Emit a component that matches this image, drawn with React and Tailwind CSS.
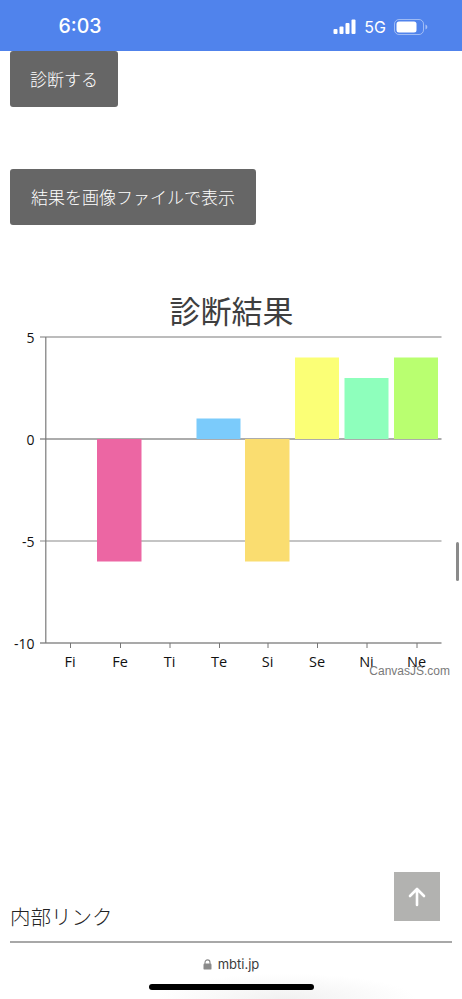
const JP = "font-['Noto_Sans_CJK_JP','Noto_Sans',sans-serif]";

const bars = [
  { x: 97, w: 44.5, y: 439, h: 122.5, color: "#ec66a3" },
  { x: 196.5, w: 44, y: 418.5, h: 20.5, color: "#7bcbfb" },
  { x: 245, w: 44.5, y: 439, h: 122.5, color: "#fadd70" },
  { x: 295, w: 44, y: 357.5, h: 81.5, color: "#fbff76" },
  { x: 344.5, w: 44, y: 378, h: 61, color: "#8effbc" },
  { x: 394, w: 44, y: 357.5, h: 81.5, color: "#b9ff70" },
];

const yLabels = [
  { label: "5", y: 337, stroke: "#7a7a7a" },
  { label: "0", y: 439, stroke: "#5a5a5a" },
  { label: "-5", y: 541, stroke: "#8a8a8a" },
  { label: "-10", y: 643, stroke: "#555" },
];

const xLabels = [
  { label: "Fi", x: 70 },
  { label: "Fe", x: 120 },
  { label: "Ti", x: 169.5 },
  { label: "Te", x: 219 },
  { label: "Si", x: 267.5 },
  { label: "Se", x: 317 },
  { label: "Ni", x: 366.5 },
  { label: "Ne", x: 416.5 },
];

function Chart() {
  // viewBox keeps page coordinates so the numbers read off the screenshot directly
  return (
    <svg width="462" height="405" viewBox="0 285 462 405" className="block">
      <text x="231.5" y="323" textAnchor="middle" fontSize="31" fill="#3f3f3f" fontFamily="'Noto Sans CJK JP', sans-serif">診断結果</text>
      {yLabels.map(l => (
        <g key={l.label}>
          <line x1="40" x2="441.5" y1={l.y} y2={l.y} stroke={l.stroke} strokeWidth="1.2" />
          <text x="34.5" y={l.y + 5.5} textAnchor="end" fontSize="14" fill="#111" fontFamily="'Open Sans', sans-serif">{l.label}</text>
        </g>
      ))}
      <line x1="45.8" x2="45.8" y1="337" y2="643" stroke="#7a7a7a" strokeWidth="1.2" />
      {bars.map(b => (
        <rect key={b.x} x={b.x} y={b.y} width={b.w} height={b.h} fill={b.color} />
      ))}
      {xLabels.map(l => (
        <g key={l.label}>
          <line x1={l.x + 0.5} x2={l.x + 0.5} y1="643" y2="648" stroke="#777" strokeWidth="1" />
          <text x={l.x} y="667" textAnchor="middle" fontSize="14.5" fill="#111" fontFamily="'Open Sans', sans-serif">{l.label}</text>
        </g>
      ))}
      <text x="450" y="675" textAnchor="end" fontSize="12" fill="#7a7a7a" fontFamily="'Liberation Sans', sans-serif">CanvasJS.com</text>
    </svg>
  );
}

function Signal() {
  return (
    <svg width="24" height="16" viewBox="0 0 24 16" className="block">
      <rect x="0.5" y="10" width="4" height="5" rx="1" fill="#fff" />
      <rect x="6.5" y="7.5" width="4" height="7.5" rx="1" fill="#fff" />
      <rect x="12.5" y="4" width="4" height="11" rx="1" fill="#fff" />
      <rect x="18.5" y="0.5" width="4" height="14.5" rx="1" fill="#fff" />
    </svg>
  );
}

function Battery() {
  return (
    <svg width="34" height="16" viewBox="0 0 34 16" className="block">
      <rect x="0.5" y="0.5" width="29" height="15" rx="4.5" fill="none" stroke="#ffffff" strokeOpacity="0.45" />
      <rect x="2.5" y="2.5" width="20" height="11" rx="2.5" fill="#fff" />
      <path d="M31.5 5.5c1.2.4 1.8 1.3 1.8 2.5s-.6 2.1-1.8 2.5z" fill="#ffffff" fillOpacity="0.5" />
    </svg>
  );
}

export default function App() {
  return (
    <div className={`relative w-[462px] h-[999px] overflow-hidden bg-white ${JP}`}>
      <div className="h-[51px] pt-[3px] bg-[#5083ec] flex items-center text-white">
        <div className="w-[160px] text-center text-[19.5px] font-medium font-['Inter',sans-serif]">6:03</div>
        <div className="ml-auto mr-[34px] flex items-center gap-[8px]">
          <Signal />
          <span className="text-[16px] font-['Inter',sans-serif] -ml-[0.5px]">5G</span>
          <Battery />
        </div>
      </div>

      <div className="px-[10px]">
        <button className="block h-[56px] w-[108px] rounded-[3px] bg-[#666666] text-center text-[17px] font-light text-white">診断する</button>
        <button className="mt-[62px] block h-[56px] w-[246px] rounded-[3px] bg-[#666666] text-center text-[17px] font-light text-white">結果を画像ファイルで表示</button>
      </div>

      <div className="mt-[60px]">
        <Chart />
      </div>

      <div className="mt-[218px] mx-[10px] h-[35px] border-b-2 border-[#a8a8a8] text-[20.5px] leading-[16px] font-light text-[#222222]">内部リンク</div>

      <button className="absolute left-[394px] top-[872px] w-[46px] h-[49px] bg-[#b2b2b0] flex items-center justify-center">
        <svg width="18" height="20" viewBox="0 0 18 20" fill="none" stroke="#fff" strokeWidth="2.6" strokeLinecap="round" strokeLinejoin="round">
          <path d="M9 18V2.5M2 9l7-7 7 7" />
        </svg>
      </button>

      <div className="absolute left-[456px] top-[542px] w-[3px] h-[39px] rounded-full bg-[#8a8a8a]" />

      <div className="absolute left-0 right-0 top-[943px] h-[56px] bg-[radial-gradient(ellipse_at_62%_100%,#f1f1f1_0%,#ffffff_32%)]">
        <div className="flex items-center justify-center gap-[6px] pt-[12px] text-[13px] leading-[18px] text-[#3c3c3c] font-['Inter',sans-serif]">
          <svg width="9" height="11" viewBox="0 0 9 11" fill="none">
            <path d="M2 5V3.4a2.5 2.5 0 0 1 5 0V5" stroke="#8a8a8a" strokeWidth="1.1" />
            <rect x="0.5" y="4.6" width="8" height="6" rx="1.2" fill="#8a8a8a" />
          </svg>
          <span>mbti.jp</span>
        </div>
        <div className="absolute left-[149px] top-[41px] w-[165px] h-[6px] rounded-full bg-black" />
      </div>
    </div>
  );
}
